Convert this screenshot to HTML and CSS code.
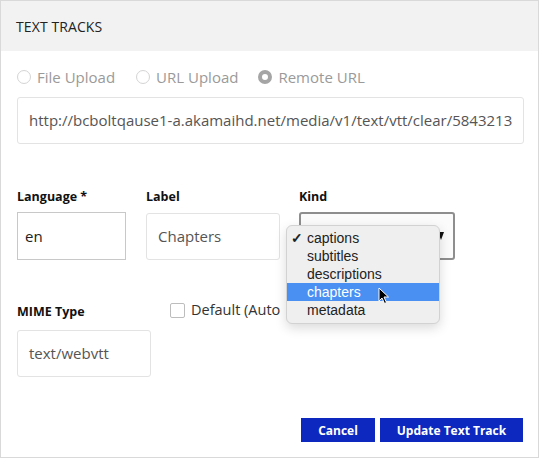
FILE: index.html
```html
<!DOCTYPE html>
<html>
<head>
<meta charset="utf-8">
<link rel="stylesheet" href="styles.css">
</head>
<body>
<div class="modal">
  <div class="header">TEXT TRACKS</div>
  <div class="content">
    <div class="radios">
      <label class="radio"><span class="circle"></span>File Upload</label>
      <label class="radio"><span class="circle"></span>URL Upload</label>
      <label class="radio"><span class="circle checked"></span>Remote URL</label>
    </div>
    <div class="url-input">http://bcboltqause1-a.akamaihd.net/media/v1/text/vtt/clear/5843213</div>

    <div class="row row-fields">
      <div class="field f-lang">
        <div class="flabel">Language *</div>
        <div class="box">en</div>
      </div>
      <div class="field f-label">
        <div class="flabel">Label</div>
        <div class="box">Chapters</div>
      </div>
      <div class="field f-kind">
        <div class="flabel">Kind</div>
        <div class="select"><span class="arrow"></span></div>
        <div class="menu">
          <div class="opt"><span class="check">&#10003;</span>captions</div>
          <div class="opt">subtitles</div>
          <div class="opt">descriptions</div>
          <div class="opt active">chapters</div>
          <div class="opt">metadata</div>
          <svg class="cursor" width="12" height="18" viewBox="0 0 12 18"><path d="M1 1 L1 14 L4 11 L6.5 16.5 L8.5 15.5 L6 10 L10.5 10 Z" fill="#000" stroke="#fff" stroke-width="1"/></svg>
        </div>
      </div>
    </div>

    <div class="row row-mime">
      <div class="field f-mime">
        <div class="flabel">MIME Type</div>
        <div class="box">text/webvtt</div>
      </div>
      <label class="checkbox"><span class="cbox"></span>Default (Auto</label>
    </div>

    <div class="actions">
      <button class="btn btn-cancel">Cancel</button>
      <button class="btn btn-update">Update Text Track</button>
    </div>
  </div>
</div>
</body>
</html>
```
FILE: styles.css
```css
* { box-sizing: border-box; }
html, body { margin: 0; padding: 0; background: #fff; }
body { font-family: "Open Sans", sans-serif; color: #222; }

.modal {
  width: 539px;
  height: 458px;
  border: 1px solid #d9d9d9;
  display: flex;
  flex-direction: column;
  overflow: hidden;
}
.header {
  height: 50px;
  background: #f2f2f2;
  padding-left: 15px;
  font-size: 14px;
  line-height: 51px;
  color: #222;
  letter-spacing: 0.1px;
}
.content {
  flex: 1;
  padding: 15px 15px 0 16px;
  display: flex;
  flex-direction: column;
}
.radios {
  display: flex;
  height: 22px;
  align-items: center;
}
.radio {
  display: flex;
  align-items: center;
  font-size: 15px;
  color: #9a9a9a;
  margin-right: 21px;
}
.radio:nth-child(2) { margin-right: 20px; }
.circle {
  width: 14px;
  height: 14px;
  border: 1px solid #d4d4d4;
  border-radius: 50%;
  margin-right: 6px;
  background: #fff;
}
.circle.checked {
  border: 4px solid #a5a5a5;
  background: #fff;
}
.url-input {
  margin-top: 9px;
  height: 47px;
  width: 507px;
  border: 1px solid #e3e3e3;
  border-radius: 3px;
  padding-left: 11px;
  font-size: 15px;
  line-height: 45px;
  color: #555;
  white-space: nowrap;
  overflow: hidden;
}
.row { display: flex; }
.row-fields { margin-top: 43px; }
.field { display: flex; flex-direction: column; }
.flabel {
  font-weight: 700;
  font-size: 12.5px;
  line-height: 20px;
  color: #111;
  height: 20px;
}
.f-lang { width: 109px; margin-right: 20px; }
.f-label { width: 134px; margin-right: 19px; }
.f-kind { width: 156px; position: relative; }
.f-lang .flabel { margin-bottom: 5px; }
.f-label .flabel { margin-bottom: 6px; }
.f-kind .flabel { margin-bottom: 5px; }
.box {
  height: 47px;
  border: 1px solid #e3e3e3;
  border-radius: 3px;
  padding-left: 11px;
  font-size: 15px;
  line-height: 45px;
  color: #555;
}
.f-lang .box { border-color: #c8c8c8; border-radius: 0; padding-left: 7px; color: #222; height: 48px; line-height: 46px; }
.select {
  height: 48px;
  border: 2px solid #8e8e8e;
  border-radius: 3px;
  background: #fbfbfb;
  position: relative;
}
.arrow {
  position: absolute;
  right: 9px;
  top: 18px;
  width: 0;
  height: 0;
  border-left: 3.5px solid transparent;
  border-right: 3.5px solid transparent;
  border-top: 8px solid #111;
}
.menu {
  position: absolute;
  left: -13px;
  top: 38px;
  width: 154px;
  height: 99px;
  background: #efefef;
  border: 1px solid #d2d2d2;
  border-radius: 6px;
  padding-top: 3px;
  box-shadow: 0 4px 12px rgba(0,0,0,0.15);
  font-family: "Liberation Sans", Arial, sans-serif;
  font-size: 14px;
  color: #222;
}
.opt {
  height: 18px;
  line-height: 18px;
  padding-left: 20px;
  position: relative;
}
.opt.active { background: #4a8ff2; color: #fff; }
.check {
  position: absolute;
  left: 4px;
  top: 0;
  font-size: 14px;
  font-weight: 700;
}
.cursor {
  position: absolute;
  left: 91px;
  top: 61px;
}
.row-mime { margin-top: 42px; align-items: flex-start; }
.f-mime { width: 134px; }
.f-mime .flabel { margin-bottom: 8px; }
.checkbox {
  display: flex;
  align-items: center;
  margin-left: 19px;
  margin-top: -2px;
  font-size: 14.5px;
  color: #333;
  line-height: 20px;
}
.cbox {
  width: 15px;
  height: 15px;
  border: 1px solid #bdbdbd;
  border-radius: 2px;
  margin-right: 6px;
  background: #fff;
}
.actions {
  margin-top: auto;
  margin-bottom: 15px;
  display: flex;
  justify-content: flex-end;
  gap: 5px;
}
.btn {
  height: 24px;
  border: none;
  background: #0c28bf;
  color: #fff;
  font-family: "Open Sans", sans-serif;
  font-weight: 700;
  font-size: 12px;
  padding: 0;
}
.btn-cancel { width: 74px; }
.btn-update { width: 143px; }
```
